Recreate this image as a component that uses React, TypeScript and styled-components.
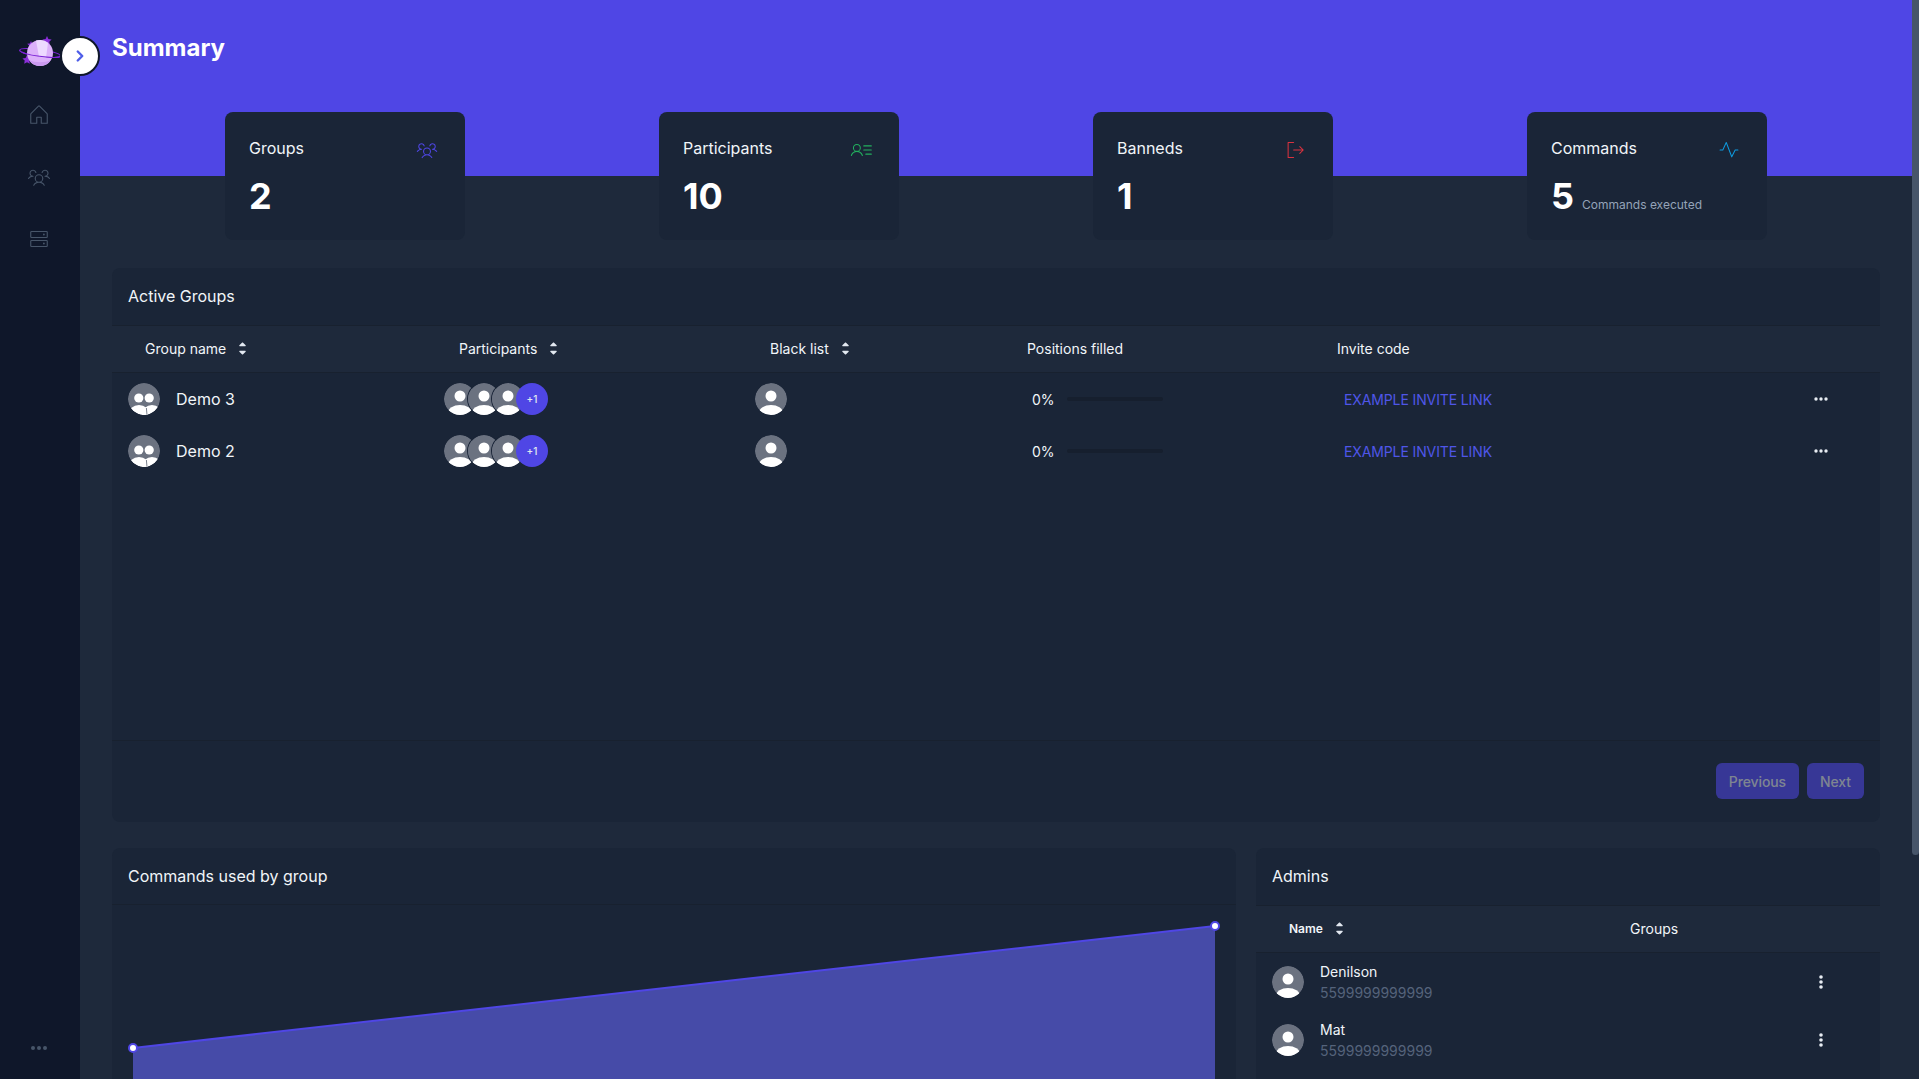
import React from "react";
import styled, { createGlobalStyle } from "styled-components";
import { ChevronRight } from "lucide-react";
import {
  PiHouseLight,
  PiUsersThreeLight,
  PiHardDrivesLight,
  PiUserListLight,
  PiSignOutLight,
  PiPulseLight,
  PiCaretUpDownFill,
} from "react-icons/pi";

const Global = createGlobalStyle`
  html, body { margin: 0; height: 100%; background: #1e293b; }
  #root { height: 100%; }
  * { box-sizing: border-box; }
  body { font-family: Inter, "Liberation Sans", sans-serif; color: #f1f5f9; overflow: hidden; }
`;

const Shell = styled.div`
  display: flex;
  height: 100vh;
`;

const Sidebar = styled.aside`
  position: relative;
  z-index: 5;
  flex: 0 0 80px;
  display: flex;
  flex-direction: column;
  align-items: center;
  padding: 35px 2px 0 0;
  background: #0f172a;
  color: #475569;
`;

const LogoMark = styled.svg`
  width: 44px;
  height: 36px;
  margin: 0 0 26px 2px;
`;

const NavItem = styled.a`
  display: flex;
  align-items: center;
  justify-content: center;
  width: 24px;
  height: 24px;
  margin-top: 6px;
  margin-bottom: 32px;
  font-size: 24px;
`;

const MoreDots = styled.div`
  margin-top: auto;
  margin-bottom: 20px;
  display: flex;
`;

const Toggle = styled.button`
  position: absolute;
  top: 36px;
  left: 60px;
  width: 40px;
  height: 40px;
  padding: 0;
  display: flex;
  align-items: center;
  justify-content: center;
  border-radius: 50%;
  border: 2px solid #0f172a;
  background: #fff;
  color: #4f5ee8;
`;

const Main = styled.main`
  flex: 1;
  min-width: 0;
  overflow: hidden;
`;

const ScrollRail = styled.div`
  flex: 0 0 7px;
  background: #1e293b;
`;

const ScrollThumb = styled.div`
  height: 855px;
  border-radius: 0 0 4px 4px;
  background: #475569;
`;

const Hero = styled.header`
  height: 176px;
  padding: 32px 32px 0;
  background: #4f46e5;
`;

const PageTitle = styled.h1`
  margin: 0;
  font-size: 24px;
  line-height: 32px;
  font-weight: 700;
  color: #fff;
`;

const StatRow = styled.section`
  display: flex;
  justify-content: space-between;
  margin-top: -64px;
  padding: 0 145px;
`;

const StatCard = styled.article`
  width: 240px;
  height: 128px;
  padding: 24px 27px 0 24px;
  border-radius: 8px;
  background: #1a2537;
`;

const StatHead = styled.div`
  display: flex;
  justify-content: space-between;
  align-items: center;
  height: 24px;
  font-size: 16px;
  font-weight: 400;
  color: #f1f5f9;
`;

const StatIcon = styled.span<{ $color: string }>`
  display: flex;
  font-size: 22px;
  margin-top: 4px;
  color: ${(p) => p.$color};
`;

const StatBody = styled.div`
  display: flex;
  align-items: baseline;
  gap: 8px;
  margin-top: 16px;
`;

const StatValue = styled.span`
  font-size: 36px;
  line-height: 40px;
  font-weight: 700;
  color: #fff;
`;

const StatNote = styled.span`
  font-size: 12px;
  color: #94a3b8;
`;

const Stack = styled.div`
  display: flex;
  flex-direction: column;
  gap: 26px;
  margin-top: 28px;
  padding: 0 32px;
`;

const Panel = styled.section`
  border-radius: 8px;
  background: #1a2537;
  overflow: hidden;
`;

const PanelTitle = styled.h2<{ $ruled?: boolean }>`
  margin: 0;
  height: 57px;
  padding: 0 16px ${(p) => (p.$ruled ? 0 : 1)}px;
  display: flex;
  align-items: center;
  font-size: 16px;
  font-weight: 400;
  color: #f1f5f9;
  border-bottom: ${(p) => (p.$ruled ? "1px solid #18212f" : "none")};
`;

const GroupCols = "316px 311px 272px 310px 1fr 70px";
const AdminCols = "48px 1fr 70px";

const HeadBand = styled.div<{ $cols: string }>`
  display: grid;
  grid-template-columns: ${(p) => p.$cols};
  align-items: center;
  height: 48px;
  padding: 0 0 2px 16px;
  background: #1e293b;
  border-top: 1px solid #18212f;
  border-bottom: 1px solid #18212f;
`;

const HeadCell = styled.div<{ $inset?: number; $small?: boolean }>`
  display: inline-flex;
  align-items: center;
  gap: 9px;
  padding-left: ${(p) => p.$inset ?? 0}px;
  font-size: ${(p) => (p.$small ? 12 : 14)}px;
  font-weight: ${(p) => (p.$small ? 600 : 400)};
  color: #f1f5f9;
  svg { font-size: 15px; color: #e2e8f0; }
`;

const GroupBody = styled.div`
  height: 368px;
  border-bottom: 1px solid #18212f;
`;

const GroupRow = styled.div`
  display: grid;
  grid-template-columns: ${GroupCols};
  align-items: center;
  height: 52px;
  padding-left: 16px;
  font-size: 14px;
`;

const NameCell = styled.div`
  display: flex;
  align-items: center;
  gap: 16px;
  font-size: 16px;
  color: #f1f5f9;
`;

const AvatarCircle = styled.svg<{ $overlap?: boolean }>`
  flex: none;
  display: block;
  width: 32px;
  height: 32px;
  border-radius: 50%;
  margin-left: ${(p) => (p.$overlap ? "-8px" : "0")};
  box-shadow: ${(p) => (p.$overlap ? "0 0 0 1px #1a2537" : "none")};
`;

const AvatarStack = styled.div`
  display: flex;
`;

const MoreBadge = styled.span`
  flex: none;
  width: 32px;
  height: 32px;
  margin-left: -8px;
  display: flex;
  align-items: center;
  justify-content: center;
  border-radius: 50%;
  background: #4f46e5;
  color: #e2e8f0;
  font-size: 10px;
  font-weight: 500;
`;

const FillCell = styled.div`
  display: flex;
  align-items: center;
  gap: 12px;
  padding-left: 5px;
  color: #f1f5f9;
`;

const FillTrack = styled.div`
  width: 96px;
  height: 4px;
  border-radius: 2px;
  background: #161f2e;
`;

const InviteLink = styled.a`
  padding-left: 7px;
  color: #4f56e8;
  font-size: 14px;
  letter-spacing: -0.12px;
  text-transform: uppercase;
`;

const RowAction = styled.span`
  display: flex;
  justify-content: flex-start;
  color: #e8edf3;
`;

const DotsSvg = styled.svg`
  display: block;
  width: 22px;
  height: 22px;
`;

const PanelFooter = styled.div`
  display: flex;
  justify-content: flex-end;
  gap: 8px;
  height: 81px;
  padding: 22px 16px 0 0;
`;

const PageButton = styled.button`
  height: 36px;
  padding: 0 13px;
  border: none;
  border-radius: 6px;
  background: #4f46e5;
  color: #d1d5db;
  font-family: inherit;
  font-size: 14px;
  font-weight: 500;
  letter-spacing: -0.1px;
  opacity: 0.55;
`;

const LowerGrid = styled.div`
  display: grid;
  grid-template-columns: 1124px 1fr;
  gap: 20px;
`;

const ChartArea = styled.svg`
  display: block;
  width: 1124px;
  height: 420px;
`;

const AdminRow = styled.div`
  display: grid;
  grid-template-columns: ${AdminCols};
  align-items: center;
  height: 58px;
  padding-left: 16px;
`;

const AdminText = styled.div`
  display: flex;
  flex-direction: column;
  gap: 1px;
`;

const AdminName = styled.span`
  font-size: 14px;
  line-height: 20px;
  color: #f1f5f9;
`;

const AdminPhone = styled.span`
  font-size: 14px;
  line-height: 20px;
  color: #55637b;
`;

const Person = ({ overlap }: { overlap?: boolean }) => (
  <AvatarCircle viewBox="0 0 32 32" $overlap={overlap}>
    <circle cx="16" cy="16" r="16" fill="#6b7280" />
    <circle cx="16" cy="13" r="5.5" fill="#fff" />
    <ellipse cx="16" cy="30" rx="12" ry="8" fill="#fff" />
  </AvatarCircle>
);

const Team = () => (
  <AvatarCircle viewBox="0 0 32 32">
    <defs>
      <clipPath id="team-clip">
        <circle cx="16" cy="16" r="16" />
      </clipPath>
    </defs>
    <circle cx="16" cy="16" r="16" fill="#6b7280" />
    <circle cx="10.8" cy="15" r="4.6" fill="#fff" />
    <circle cx="21.2" cy="15" r="4.6" fill="#fff" />
    <g clipPath="url(#team-clip)">
      <ellipse cx="11" cy="31" rx="10.5" ry="9" fill="#fff" />
      <ellipse cx="24" cy="31" rx="10" ry="9" fill="#fff" />
      <path d="M19 32 L18.4 25" stroke="#6b7280" strokeWidth="0.9" fill="none" />
    </g>
  </AvatarCircle>
);

const Dots = ({ vertical, r = 1.7, step = 5 }: { vertical?: boolean; r?: number; step?: number }) => (
  <DotsSvg viewBox="0 0 22 22" fill="currentColor">
    {[-step, 0, step].map((d) => (
      <circle key={d} cx={vertical ? 11 : 11 + d} cy={vertical ? 11 + d : 11} r={r} />
    ))}
  </DotsSvg>
);

const Sort = () => <PiCaretUpDownFill />;

const groups = ["Demo 3", "Demo 2"];

const admins = [
  { name: "Denilson", phone: "5599999999999" },
  { name: "Mat", phone: "5599999999999" },
];

export default function App() {
  return (
    <Shell>
      <Global />
      <Sidebar>
        <LogoMark viewBox="18 35 44 36">
          <ellipse cx="40" cy="53" rx="20.5" ry="3.4" transform="rotate(8 40 53)" fill="none" stroke="#7c22d6" strokeWidth="1" />
          <path d="M47 36l1.4 3 3.2.5-2.3 2.3.5 3.2-2.8-1.5-2.8 1.5.5-3.2-2.3-2.3 3.2-.5z" fill="#8b2fd9" />
          <path d="M31 41l1.2 2.4 2.6.4-1.9 1.8.5 2.6-2.4-1.2-2.4 1.2.5-2.6-1.9-1.8 2.6-.4z" fill="#8b2fd9" />
          <path d="M27 55l1.4 2.9 3.2.5-2.3 2.2.5 3.2-2.8-1.5-2.8 1.5.5-3.2-2.3-2.2 3.2-.5z" fill="#8b2fd9" />
          <circle cx="40" cy="53" r="13" fill="#dcb0fa" />
          <path d="M36 40.6a13 13 0 0 1 12 2.2l-2 15-7-1z" fill="#edd9ff" />
          <path d="M29 60a13 13 0 0 0 22 0c-6 3-16 3-22 0z" fill="#cb9af0" />
          <path d="M19.5 53 A20.5 3.4 0 0 0 60.5 53" transform="rotate(8 40 53)" fill="none" stroke="#7c22d6" strokeWidth="1" />
        </LogoMark>
        <NavItem><PiHouseLight /></NavItem>
        <NavItem><PiUsersThreeLight /></NavItem>
        <NavItem><PiHardDrivesLight /></NavItem>
        <MoreDots><Dots r={2} step={6} /></MoreDots>
        <Toggle><ChevronRight size={18} strokeWidth={3.2} /></Toggle>
      </Sidebar>
      <Main>
        <Hero>
          <PageTitle>Summary</PageTitle>
        </Hero>
        <StatRow>
          <StatCard>
            <StatHead>Groups<StatIcon $color="#4f46e5"><PiUsersThreeLight /></StatIcon></StatHead>
            <StatBody><StatValue>2</StatValue></StatBody>
          </StatCard>
          <StatCard>
            <StatHead>Participants<StatIcon $color="#22b05e"><PiUserListLight /></StatIcon></StatHead>
            <StatBody><StatValue>10</StatValue></StatBody>
          </StatCard>
          <StatCard>
            <StatHead>Banneds<StatIcon $color="#d9323f"><PiSignOutLight /></StatIcon></StatHead>
            <StatBody><StatValue>1</StatValue></StatBody>
          </StatCard>
          <StatCard>
            <StatHead>Commands<StatIcon $color="#0e9be0"><PiPulseLight /></StatIcon></StatHead>
            <StatBody><StatValue>5</StatValue><StatNote>Commands executed</StatNote></StatBody>
          </StatCard>
        </StatRow>
        <Stack>
          <Panel>
            <PanelTitle>Active Groups</PanelTitle>
            <HeadBand $cols={GroupCols}>
              <HeadCell $inset={17}>Group name <Sort /></HeadCell>
              <HeadCell $inset={15}>Participants <Sort /></HeadCell>
              <HeadCell $inset={15}>Black list <Sort /></HeadCell>
              <HeadCell>Positions filled</HeadCell>
              <HeadCell>Invite code</HeadCell>
            </HeadBand>
            <GroupBody>
              {groups.map((g) => (
                <GroupRow key={g}>
                  <NameCell><Team />{g}</NameCell>
                  <AvatarStack>
                    <Person />
                    <Person overlap />
                    <Person overlap />
                    <MoreBadge>+1</MoreBadge>
                  </AvatarStack>
                  <div><Person /></div>
                  <FillCell>0%<FillTrack /></FillCell>
                  <InviteLink>Example invite link</InviteLink>
                  <RowAction><Dots /></RowAction>
                </GroupRow>
              ))}
            </GroupBody>
            <PanelFooter>
              <PageButton>Previous</PageButton>
              <PageButton>Next</PageButton>
            </PanelFooter>
          </Panel>
          <LowerGrid>
            <Panel>
              <PanelTitle $ruled>Commands used by group</PanelTitle>
              <ChartArea viewBox="0 0 1124 420">
                <path d="M21 143 L1103 21 L1103 420 L21 420 Z" fill="#464ba8" />
                <path d="M21 143 L1103 21" stroke="#4f46e5" strokeWidth="2" fill="none" />
                <circle cx="21" cy="143" r="4" fill="#fff" stroke="#4f46e5" strokeWidth="2" />
                <circle cx="1103" cy="21" r="4" fill="#fff" stroke="#4f46e5" strokeWidth="2" />
              </ChartArea>
            </Panel>
            <Panel>
              <PanelTitle>Admins</PanelTitle>
              <HeadBand $cols="358px 1fr">
                <HeadCell $inset={17} $small>Name <Sort /></HeadCell>
                <HeadCell>Groups</HeadCell>
              </HeadBand>
              {admins.map((a) => (
                <AdminRow key={a.name}>
                  <Person />
                  <AdminText>
                    <AdminName>{a.name}</AdminName>
                    <AdminPhone>{a.phone}</AdminPhone>
                  </AdminText>
                  <RowAction><Dots vertical r={1.8} /></RowAction>
                </AdminRow>
              ))}
            </Panel>
          </LowerGrid>
        </Stack>
      </Main>
      <ScrollRail><ScrollThumb /></ScrollRail>
    </Shell>
  );
}
